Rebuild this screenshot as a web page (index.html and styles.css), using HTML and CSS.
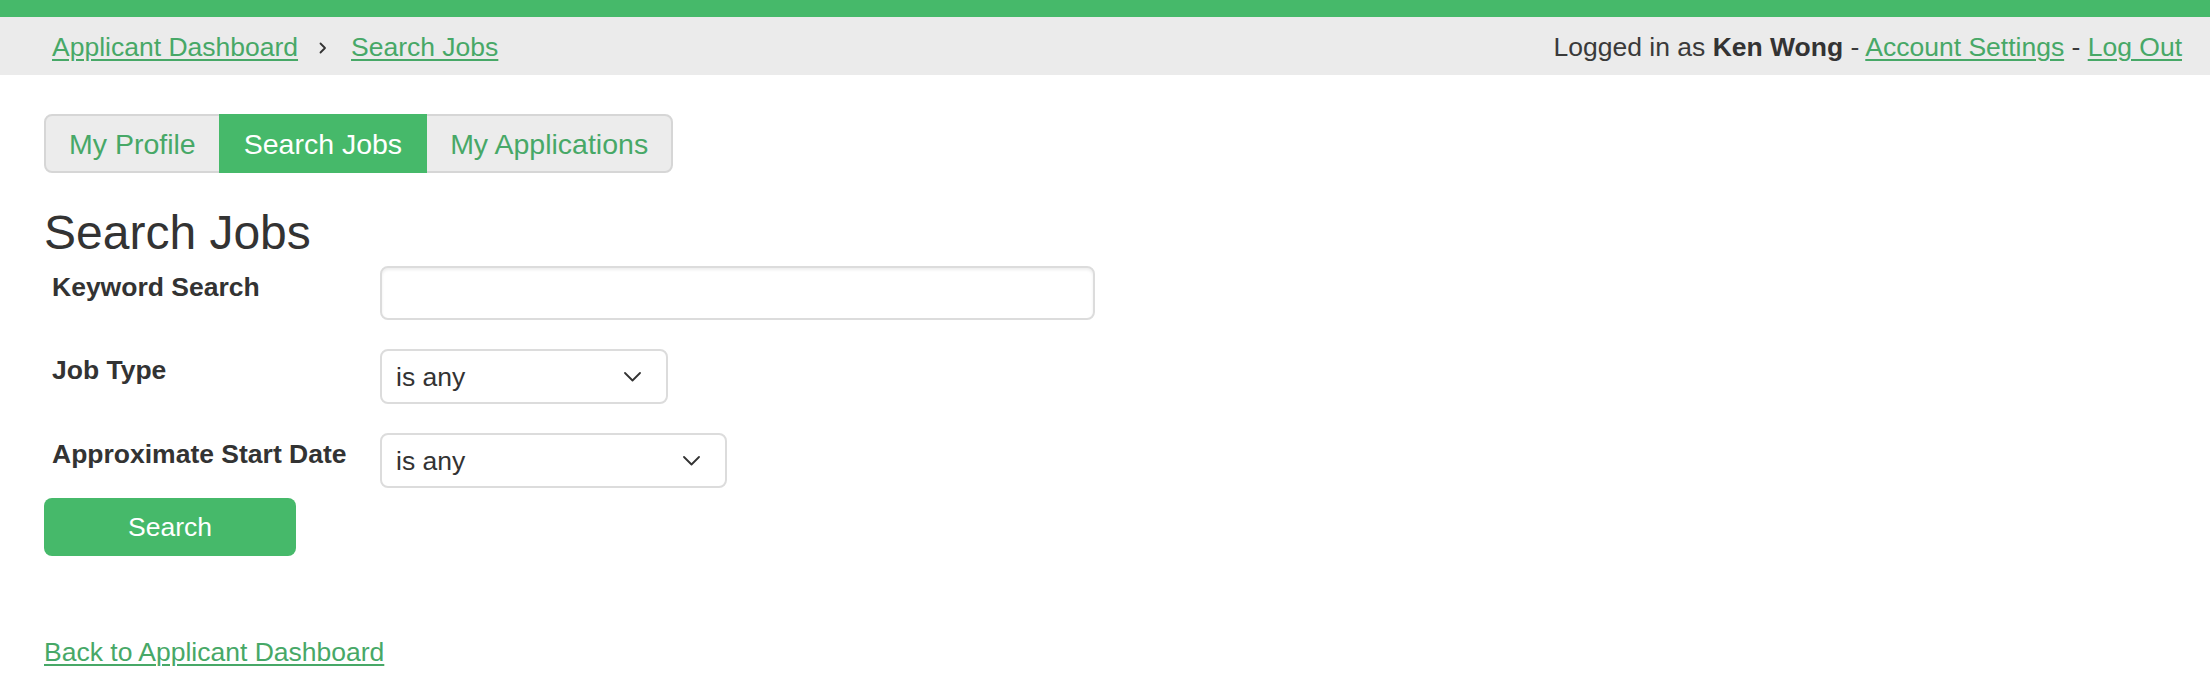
FILE: index.html
```html
<!DOCTYPE html>
<html lang="en">
<head>
<meta charset="utf-8">
<title>Search Jobs</title>
<link rel="stylesheet" href="styles.css">
</head>
<body>
<div class="topbar"></div>
<header class="header">
  <nav class="crumbs">
    <a href="#" class="link">Applicant Dashboard</a>
    <svg class="crumb-sep" width="8" height="12" viewBox="0 0 8 12"><polyline points="1.5,1.5 6,6 1.5,10.5" fill="none" stroke="#333" stroke-width="1.8" stroke-linecap="round" stroke-linejoin="round"/></svg>
    <a href="#" class="link">Search Jobs</a>
  </nav>
  <div class="user">Logged in as <b>Ken Wong</b> - <a href="#" class="link">Account Settings</a> - <a href="#" class="link">Log Out</a></div>
</header>
<main class="page">
  <div class="tabs">
    <a href="#" class="tab tab-first">My Profile</a>
    <a href="#" class="tab tab-active">Search Jobs</a>
    <a href="#" class="tab tab-last">My Applications</a>
  </div>
  <h1 class="title">Search Jobs</h1>
  <form class="search-form">
    <div class="row">
      <label class="label" for="kw">Keyword Search</label>
      <input id="kw" class="text-input" type="text">
    </div>
    <div class="row">
      <label class="label" for="jt">Job Type</label>
      <div class="select-wrap select-job">
        <select id="jt" class="select"><option>is any</option></select>
        <svg class="chev" width="17" height="10" viewBox="0 0 17 10"><polyline points="1,1 8.5,8.5 16,1" fill="none" stroke="#333" stroke-width="1.8" stroke-linecap="round" stroke-linejoin="round"/></svg>
      </div>
    </div>
    <div class="row row-last">
      <label class="label" for="sd">Approximate Start Date</label>
      <div class="select-wrap select-date">
        <select id="sd" class="select"><option>is any</option></select>
        <svg class="chev" width="17" height="10" viewBox="0 0 17 10"><polyline points="1,1 8.5,8.5 16,1" fill="none" stroke="#333" stroke-width="1.8" stroke-linecap="round" stroke-linejoin="round"/></svg>
      </div>
    </div>
    <button type="button" class="btn">Search</button>
  </form>
  <a href="#" class="link back">Back to Applicant Dashboard</a>
</main>
</body>
</html>
```
FILE: styles.css
```css
* { box-sizing: border-box; }

body {
  margin: 0;
  font-family: "Liberation Sans", Arial, Helvetica, sans-serif;
  color: #333;
  background: #fff;
}

.topbar {
  height: 17px;
  background: #46b96a;
}

.header {
  display: flex;
  justify-content: space-between;
  align-items: flex-start;
  height: 58px;
  padding: 16px 28px 13px 52px;
  background: #ebebeb;
  font-size: 26.5px;
  line-height: 29px;
}

.crumbs {
  display: flex;
  align-items: center;
}

.crumb-sep {
  margin: 0 24px 0 21px;
}

.user {
  color: #3a3a3a;
}

.user b {
  color: #333;
}

.link {
  color: #47a867;
  text-decoration: underline;
  text-decoration-thickness: 2px;
  text-underline-offset: 3px;
}

.page {
  padding-left: 44px;
}

.tabs {
  display: inline-flex;
  margin-top: 39px;
}

.tab {
  display: block;
  font-size: 28.5px;
  line-height: 32px;
  padding: 12px 23px 11px;
  border: 2px solid #d6d6d6;
  background: #ececec;
  color: #47a867;
  text-decoration: none;
}

.tab + .tab {
  margin-left: -2px;
}

.tab-first {
  border-radius: 8px 0 0 8px;
}

.tab-last {
  border-radius: 0 8px 8px 0;
}

.tab-active {
  position: relative;
  background: #46b96a;
  border-color: #46b96a;
  color: #fff;
}

.title {
  margin: 33px 0 6px;
  font-size: 48px;
  line-height: 54px;
  font-weight: normal;
  color: #333;
}

.search-form {
  display: flex;
  flex-direction: column;
  align-items: flex-start;
}

.row {
  display: flex;
  align-items: flex-start;
  margin-bottom: 29px;
}

.row-last {
  margin-bottom: 10px;
}

.label {
  width: 336px;
  padding: 6px 0 0 8px;
  font-size: 26.5px;
  font-weight: bold;
  color: #333;
}

.text-input {
  width: 715px;
  height: 54px;
  border: 2px solid #dcdcdc;
  border-radius: 8px;
  box-shadow: inset 0 2px 3px rgba(0, 0, 0, 0.07);
  font-size: 26px;
  font-family: inherit;
  padding: 0 14px;
}

.select-wrap {
  position: relative;
  height: 55px;
}

.select-job { width: 288px; }
.select-date { width: 347px; }

.select {
  -webkit-appearance: none;
  appearance: none;
  width: 100%;
  height: 100%;
  border: 2px solid #dcdcdc;
  border-radius: 8px;
  background: #fff;
  font-family: inherit;
  font-size: 26.5px;
  color: #333;
  padding: 0 0 0 14px;
}

.chev {
  position: absolute;
  right: 27px;
  top: 23px;
  pointer-events: none;
}

.btn {
  display: block;
  width: 252px;
  height: 58px;
  border: none;
  border-radius: 8px;
  background: #46b96a;
  color: #fff;
  font-family: inherit;
  font-size: 26.5px;
  padding: 0;
}

.back {
  display: inline-block;
  margin-top: 82px;
  font-size: 26.5px;
  line-height: 29px;
}
```
